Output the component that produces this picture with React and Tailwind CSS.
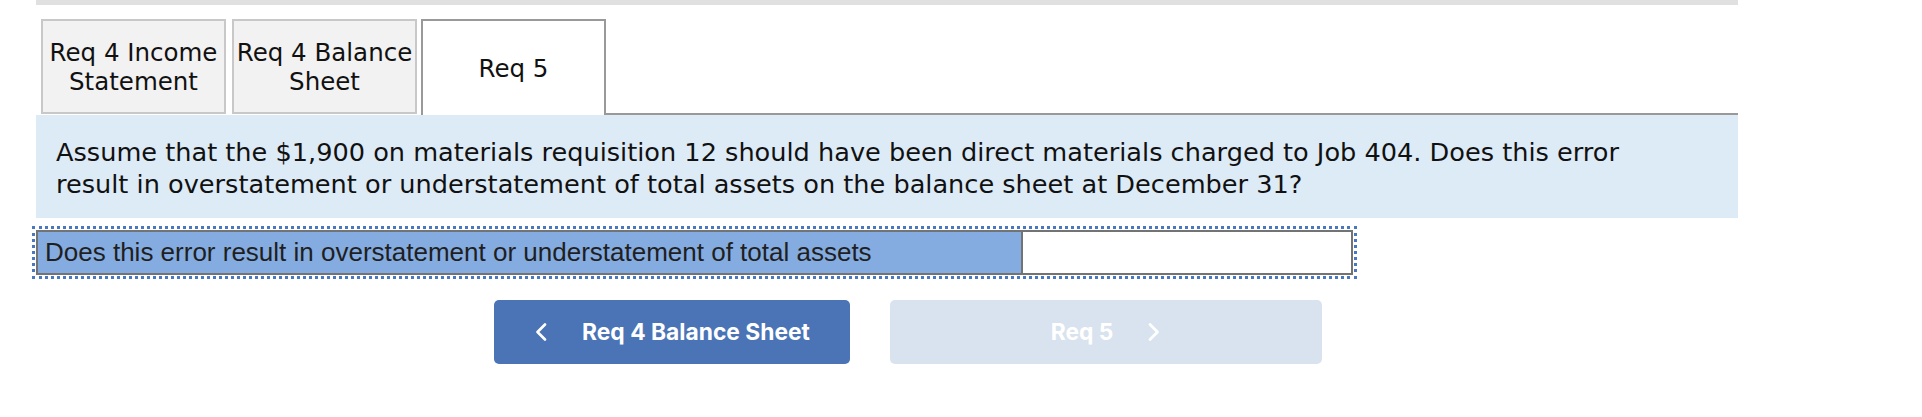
import React from 'react';

const Chevron = ({ dir = 'left' }) => (
  <svg width="14" height="18" viewBox="0 0 14 18" className="shrink-0">
    <polyline
      points={dir === 'left' ? '11,1.5 3.5,9 11,16.5' : '3,1.5 10.5,9 3,16.5'}
      fill="none"
      stroke="white"
      strokeWidth="2.6"
      strokeLinecap="round"
      strokeLinejoin="round"
    />
  </svg>
);

const Tab = ({ active, children, className = '' }) => (
  <div
    className={`flex w-[185px] items-center justify-center text-center text-[24.5px] leading-[29px] text-[#111] ${
      active
        ? 'h-[96px] border-2 border-b-0 border-[#999] bg-white'
        : 'h-[95px] border-2 border-[#c8c8c8] bg-[#f2f2f2]'
    } ${className}`}
  >
    {children}
  </div>
);

export default function App() {
  return (
    <div className="min-h-[417px] w-full bg-white font-['DejaVu_Sans',Verdana,sans-serif]">
      <div className="ml-[36px] w-[1702px]">
        <div className="h-[5px] bg-[#e0e0e0]" />

        {/* tabs */}
        <div className="mt-[14px] flex items-start">
          <Tab className="ml-[5px] w-[184px]">
            Req 4 Income
            <br />
            Statement
          </Tab>
          <Tab className="ml-[6px]">
            Req 4 Balance
            <br />
            Sheet
          </Tab>
          <Tab active className="ml-[4px]">
            Req 5
          </Tab>
          <div className="h-[96px] flex-1 border-b-2 border-[#999]" />
        </div>

        {/* question */}
        <div className="bg-[#ddebf7] pb-[18px] pl-[20px] pr-[40px] pt-[21px] text-[25.6px] leading-[32px] text-[#111]">
          Assume that the $1,900 on materials requisition 12 should have been direct materials charged to Job 404. Does this error
          result in overstatement or understatement of total assets on the balance sheet at December 31?
        </div>
      </div>

      {/* answer row */}
      <div className="ml-[32px] mt-[8px] w-[1325px] border-[3px] border-dotted border-[#4a78c0] p-px">
        <div className="flex h-[45px] border-2 border-[#737373]">
          <div className="flex w-[985px] items-center border-r-2 border-[#737373] bg-[#84ace0] pl-[7px] font-['Liberation_Sans',Arial,sans-serif] text-[26px] text-[#1f1f1f]">
            Does this error result in overstatement or understatement of total assets
          </div>
          <input className="min-w-0 flex-1 bg-white outline-none" aria-label="answer" />
        </div>
      </div>

      {/* nav buttons */}
      <div className="ml-[494px] mt-[21px] flex gap-[40px] font-['Inter',sans-serif] text-[22.8px] font-bold text-white">
        <button className="flex h-[64px] w-[356px] items-center justify-center gap-[34px] rounded-[5px] bg-[#4a74b5]">
          <Chevron dir="left" />
          <span>Req 4 Balance Sheet</span>
        </button>
        <button className="flex h-[64px] w-[432px] items-center justify-center gap-[34px] rounded-[5px] bg-[#d9e3ef]">
          <span>Req 5</span>
          <Chevron dir="right" />
        </button>
      </div>
    </div>
  );
}
